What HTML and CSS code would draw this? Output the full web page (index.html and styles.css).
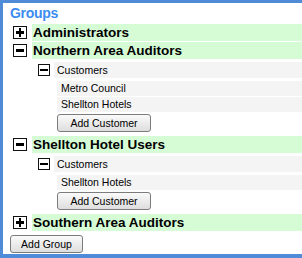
FILE: index.html
```html
<!DOCTYPE html>
<html lang="en">
<head>
  <meta charset="UTF-8" />
  <title>Groups</title>
  <link rel="stylesheet" href="styles.css">
</head>
<body>

  <div class="panel">
    <h1 class="title">Groups</h1>

    <div class="group">
      <div class="group-row">
        <span class="toggle plus"></span>
        <span class="group-name">Administrators</span>
      </div>
    </div>

    <div class="group">
      <div class="group-row">
        <span class="toggle minus"></span>
        <span class="group-name">Northern Area Auditors</span>
      </div>
      <div class="sub">
        <div class="sub-row">
          <span class="toggle small minus"></span>
          <span class="sub-name">Customers</span>
        </div>
        <ul class="items">
          <li>Metro Council</li>
          <li>Shellton Hotels</li>
        </ul>
        <button class="btn">Add Customer</button>
      </div>
    </div>

    <div class="group">
      <div class="group-row">
        <span class="toggle minus"></span>
        <span class="group-name">Shellton Hotel Users</span>
      </div>
      <div class="sub">
        <div class="sub-row">
          <span class="toggle small minus"></span>
          <span class="sub-name">Customers</span>
        </div>
        <ul class="items">
          <li>Shellton Hotels</li>
        </ul>
        <button class="btn">Add Customer</button>
      </div>
    </div>

    <div class="group">
      <div class="group-row">
        <span class="toggle plus"></span>
        <span class="group-name">Southern Area Auditors</span>
      </div>
    </div>

    <button class="btn add-group">Add Group</button>
  </div>

</body>
</html>
```

FILE: styles.css
```css
:root {
  --frame: #4f8bd6;
  --title: #3a8cf0;
  --group-bg: #d6fcd6;
  --row-bg: #f4f4f4;
  --text: #000;
}

body {
  margin: 0;
  font-family: 'Liberation Sans', Arial, sans-serif;
  color: var(--text);
  background: #fff;
}

.panel {
  height: 258px;
  box-sizing: border-box;
  border: 3px solid var(--frame);
  border-right: none;
  border-bottom-width: 4px;
  padding: 1px 0 0 7px;
  display: flex;
  flex-direction: column;
}

.title {
  margin: 0;
  height: 20px;
  font-size: 14px;
  line-height: 18px;
  letter-spacing: -0.3px;
  color: var(--title);
}

.group-row {
  display: flex;
  align-items: center;
  height: 17px;
  margin-bottom: 1px;
}

.group-row .toggle {
  margin: 0 5px 0 3px;
}

.group-name {
  flex: 1;
  align-self: stretch;
  background: var(--group-bg);
  font-weight: bold;
  font-size: 13.5px;
  line-height: 17px;
  padding-left: 1px;
}

.toggle {
  position: relative;
  width: 12px;
  height: 11px;
  border: 1px solid #111;
  background: #fff;
  flex-shrink: 0;
}

.toggle::before,
.toggle::after {
  content: '';
  position: absolute;
  background: #000;
}

.toggle::before {
  left: 2px;
  right: 2px;
  top: 4px;
  height: 3px;
}

.plus::after {
  top: 1px;
  bottom: 1px;
  left: 5px;
  width: 2px;
}

.toggle.small {
  width: 10px;
  height: 10px;
}

.toggle.small::before {
  left: 1px;
  right: 1px;
  top: 4px;
  height: 2px;
}

.sub {
  padding: 2px 0 4px 28px;
}

.sub-row {
  display: flex;
  align-items: center;
  height: 16px;
  margin-bottom: 3px;
}

.sub-row .toggle {
  margin-right: 4px;
}

.sub-name {
  flex: 1;
  align-self: stretch;
  background: var(--row-bg);
  font-size: 10.5px;
  line-height: 16px;
  padding-left: 3px;
}

.items {
  list-style: none;
  margin: 0;
  padding: 0 0 0 19px;
}

.items li {
  height: 15px;
  margin-bottom: 1px;
  background: var(--row-bg);
  font-size: 10.5px;
  line-height: 15px;
  padding-left: 4px;
}

.btn {
  display: block;
  height: 18px;
  padding: 0 10px;
  margin: 2px 0 0 19px;
  border: 1px solid #7c7c7c;
  border-radius: 3px;
  background: linear-gradient(#fafafa, #dedede);
  font-family: 'Liberation Sans', Arial, sans-serif;
  font-size: 10.5px;
  color: #000;
  width: 94px;
}

.add-group {
  margin: 3px 0 0 0;
  width: 73px;
}
```
